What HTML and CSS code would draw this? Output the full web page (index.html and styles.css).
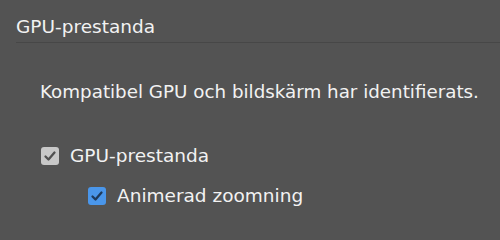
FILE: index.html
```html
<!DOCTYPE html>
<html>
<head>
<meta charset="utf-8">
<link rel="stylesheet" href="styles.css">
</head>
<body>
<div class="panel">
  <div class="header"><span class="title">GPU-prestanda</span></div>
  <div class="content">
    <p class="info">Kompatibel GPU och bildskärm har identifierats.</p>
    <label class="check-row">
      <span class="box box-gray"><svg viewBox="0 0 18 18" width="18" height="18"><path d="M4.5 9.5 L7.5 12.5 L13.5 5.5" fill="none" stroke="#505050" stroke-width="2.3" stroke-linecap="round" stroke-linejoin="round"/></svg></span>
      <span class="label">GPU-prestanda</span>
    </label>
    <label class="check-row sub">
      <span class="box box-blue"><svg viewBox="0 0 18 18" width="18" height="18"><path d="M4.5 9.5 L7.5 12.5 L13.5 5.5" fill="none" stroke="#1e3a5c" stroke-width="2.3" stroke-linecap="round" stroke-linejoin="round"/></svg></span>
      <span class="label">Animerad zoomning</span>
    </label>
  </div>
</div>
</body>
</html>
```

FILE: styles.css
```css
html, body {
  margin: 0;
  padding: 0;
  background: #535353;
}
body {
  width: 500px;
  height: 227px;
  overflow: hidden;
  font-family: "DejaVu Sans", "Liberation Sans", sans-serif;
  color: #f2f2f2;
}
.panel {
  display: flex;
  flex-direction: column;
}
.header {
  margin-left: 16px;
  padding-top: 16px;
  height: 26px;
  border-bottom: 1px solid #474747;
  font-size: 18.5px;
  line-height: 22px;
}
.content {
  padding-left: 41px;
  display: flex;
  flex-direction: column;
}
.info {
  margin: 38px 0 0 -1px;
  font-size: 18.3px;
  line-height: 22px;
}
.check-row {
  display: flex;
  align-items: center;
  gap: 11px;
  margin-top: 42px;
  font-size: 18.5px;
  line-height: 22px;
}
.check-row.sub {
  margin-left: 47px;
  margin-top: 18px;
}
.box {
  width: 18px;
  height: 18px;
  border-radius: 3px;
  display: flex;
}
.box-gray {
  background: #c8c8c8;
}
.box-blue {
  background: #4a96ea;
}
```
